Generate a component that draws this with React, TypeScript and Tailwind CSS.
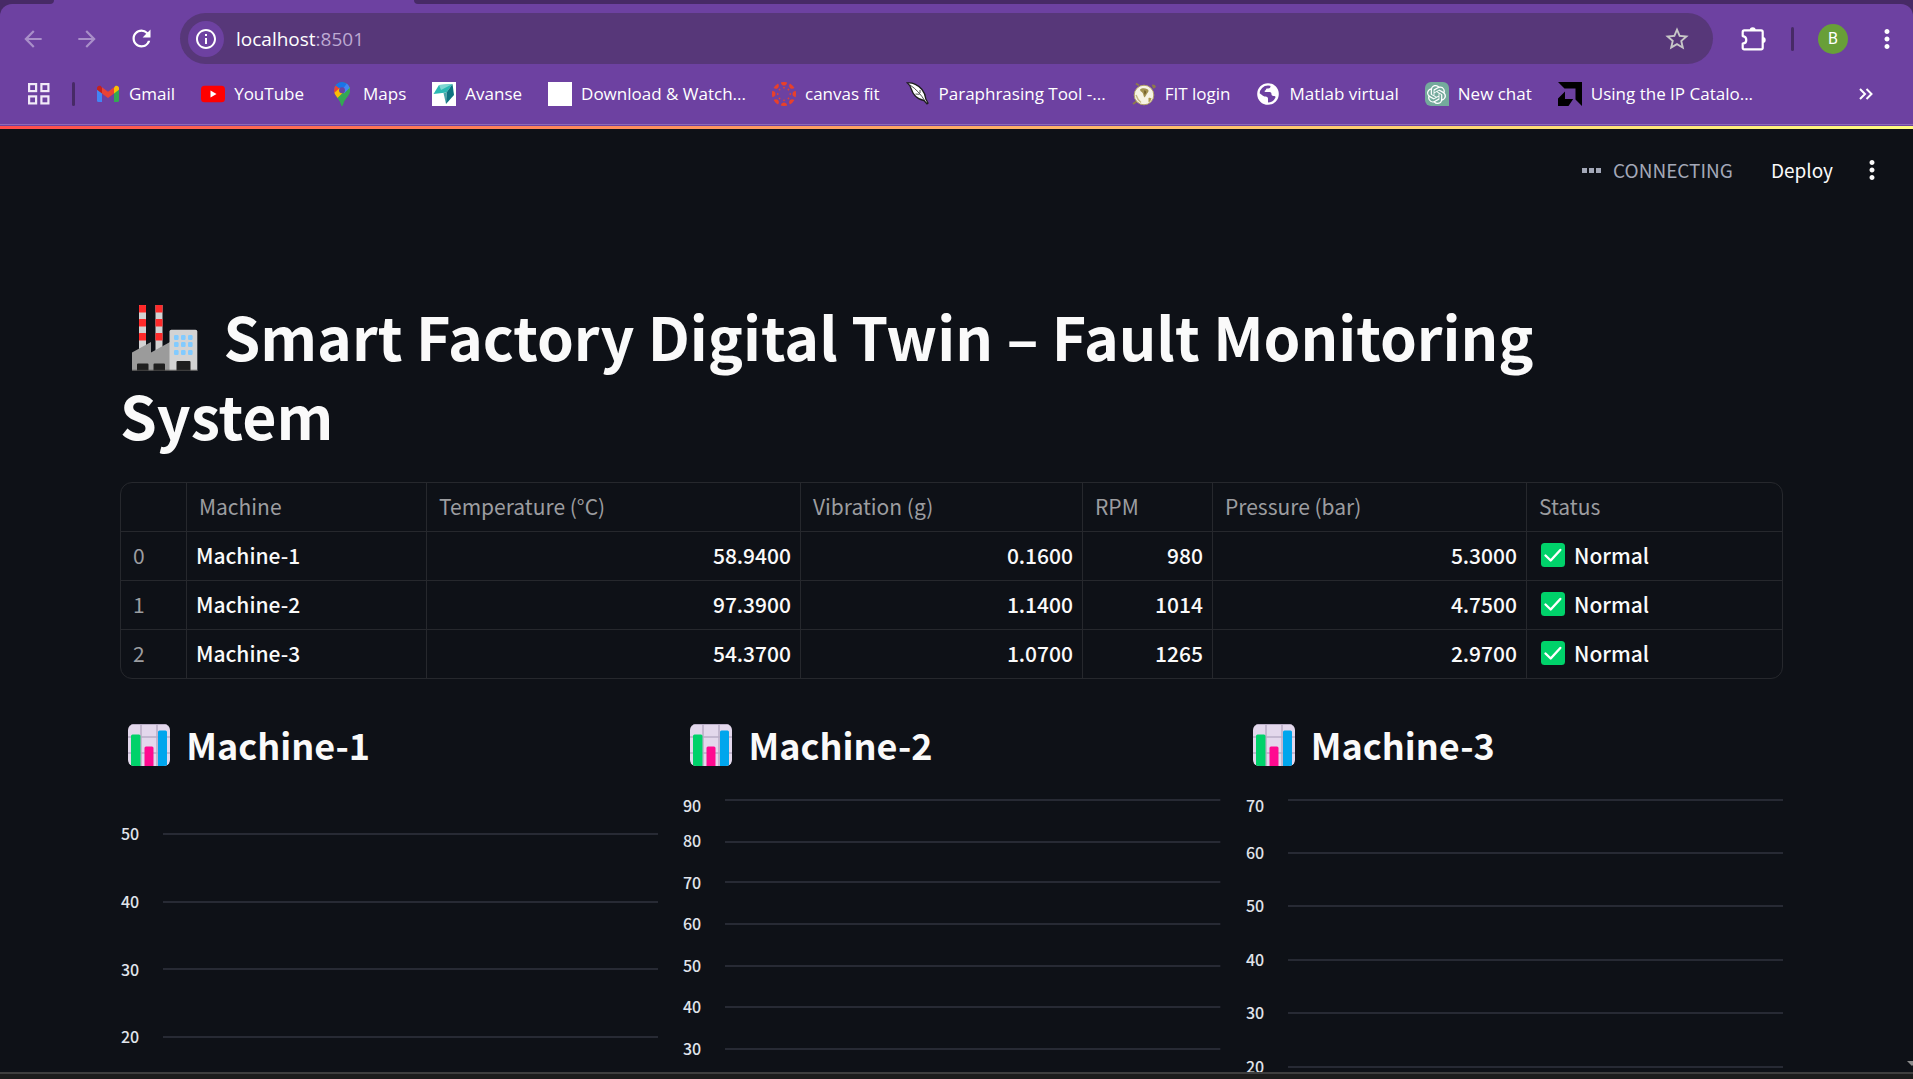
import type { ReactNode } from "react";
import {
  MdArrowBack,
  MdArrowForward,
  MdInfoOutline,
  MdMoreVert,
  MdRefresh,
  MdStarBorder,
} from "react-icons/md";
import { SiOpenai } from "react-icons/si";

/* ---------- Browser icons ---------- */

function PuzzleIcon() {
  return (
    <svg viewBox="0 0 26 26" className="size-[26px]" fill="none" aria-hidden="true">
      <path
        d="M3.2 4.4h17a1.5 1.5 0 0 1 1.5 1.5v16a1.5 1.5 0 0 1-1.5 1.5h-17a1.5 1.5 0 0 1-1.5-1.5v-4.2c2.4-.3 3.6-1.8 3.6-3.8S4.1 10.4 1.7 10.1V5.9a1.5 1.5 0 0 1 1.5-1.5z"
        stroke="#fff"
        strokeWidth="2.2"
        strokeLinejoin="round"
      />
      <path d="M8.7 4.2a3 3 0 0 1 6 0zM21.7 10.9a3 3 0 0 1 0 6z" fill="#fff" />
    </svg>
  );
}

function AppsIcon() {
  return (
    <svg viewBox="0 0 22 22" className="size-[22px]" fill="none" stroke="#f1eaf8" strokeWidth="2.2" aria-hidden="true">
      <rect x="1.1" y="1.1" width="7" height="7" />
      <rect x="13.4" y="1.1" width="7" height="7" />
      <rect x="1.1" y="13.4" width="7" height="7" />
      <rect x="13.4" y="13.4" width="7" height="7" />
    </svg>
  );
}

function DoubleChevron() {
  return (
    <svg viewBox="0 0 14 12" className="h-3 w-[14px]" fill="none" stroke="#fff" strokeWidth="2" aria-hidden="true">
      <path d="M1 1l5 5-5 5M7.5 1l5 5-5 5" />
    </svg>
  );
}

function GmailIcon() {
  return (
    <svg viewBox="0 0 24 24" className="size-6" aria-hidden="true">
      <path d="M1 7v11.500A1.500 1.500 0 0 0 2.500 20H6v-9.500z" fill="#4285f4" />
      <path d="M18 10.500V20h3.500a1.500 1.500 0 0 0 1.500-1.500V7z" fill="#34a853" />
      <path d="M18 5.700v5.800l5-3.800V6c0-2-2.300-3-3.800-1.900z" fill="#fbbc04" />
      <path d="M6 11.500V5.200l6 4.500 6-4.500v6.300L12 16z" fill="#ea4335" />
      <path d="M1 6v1.700l5 3.800V5.700L4.800 4.100C3.300 3 1 4 1 6z" fill="#c5221f" />
    </svg>
  );
}

function YouTubeIcon() {
  return (
    <svg viewBox="0 0 24 24" className="size-6" aria-hidden="true">
      <rect x="0" y="3.7" width="24" height="16.6" rx="3.6" fill="#f00" />
      <path d="M9.500 8.500v7l6-3.500z" fill="#fff" />
    </svg>
  );
}

function MapsIcon() {
  return (
    <svg viewBox="0 0 24 24" className="size-6" aria-hidden="true">
      <defs>
        <clipPath id="pin">
          <path d="M12 .2a8 8 0 0 0-8 8c0 3 1.400 4.800 3.300 7.200 1.800 2.300 3 4 3.600 6.800.2 1 .5 1.500 1.100 1.500s.9-.5 1.100-1.500c.6-2.800 1.800-4.500 3.600-6.800C18.600 13 20 11.200 20 8.200a8 8 0 0 0-8-8z" />
        </clipPath>
      </defs>
      <g clipPath="url(#pin)">
        <rect width="24" height="24" fill="#34a853" />
        <path d="M0 0h14l-9 11-5-2z" fill="#1a73e8" />
        <path d="M0 3.500h6L12 8 7 13.500 3 12z" fill="#ea4335" />
        <path d="M8.500 0H24v3.500L12 8.500 6 3.600z" fill="#1a73e8" />
        <path d="M14.500 0 24 4.500 15.500 9 12 8l4.500-6z" fill="#4285f4" />
        <path d="M3.500 11.500 9.800 6 12 8.500l6.500-5L20 7 7.500 17z" fill="#fbbc04" />
        <path d="M14 9.500 20 4.500V14l-8 10-5-7.500z" fill="#34a853" />
        <path d="M12 8.200 17.500 2 20 5.500l-6 6z" fill="#4285f4" />
      </g>
      <circle cx="12" cy="8.2" r="3" fill="#6d41a1" />
    </svg>
  );
}

function AvanseIcon() {
  return (
    <svg viewBox="0 0 24 24" className="size-6" aria-hidden="true">
      <rect width="24" height="24" fill="#fff" />
      <path d="M7 3 20.500 2 14.500 10.500 1.500 12z" fill="#2bb9b4" />
      <path d="M7 3 20.500 2 9 8z" fill="#7fd6d2" />
      <path d="M20.500 2 22 13 14 22 14.500 10.500z" fill="#0e7280" />
      <path d="M14.500 10.500 14 22 11.500 11z" fill="#4aa5a8" />
    </svg>
  );
}

function BlankIcon() {
  return <span className="size-6 bg-white" aria-hidden="true" />;
}

function CanvasIcon() {
  const turns = [0, 45, 90, 135, 180, 225, 270, 315];
  return (
    <svg viewBox="0 0 24 24" className="size-6" fill="#e8402a" aria-hidden="true">
      {turns.map((a) => (
        <g key={a} transform={`rotate(${a} 12 12)`}>
          <path d="M8.8.4a12 12 0 0 1 6.4 0c-.3 1.900-1.600 3.100-3.200 3.100S9.100 2.300 8.800.4z" />
          <circle cx="12" cy="5.7" r=".9" />
        </g>
      ))}
    </svg>
  );
}

function QuillIcon() {
  return (
    <svg viewBox="0 0 24 24" className="size-6" aria-hidden="true">
      <path
        d="M1.500 1c5-.6 11 2 14.500 6.500 2.500 3.200 3.600 7 3.800 9.500l2.200 4-1 .8-3-3.300C10 17 6.500 11 5.500 7.500 4.600 4.500 3.500 2.500 1.500 1z"
        fill="#fff"
        stroke="#1c1c1c"
        strokeWidth="1.3"
      />
      <path d="M4 3c6 4 11 9.500 15 16M9.500 12l4 .3M14 8v3" fill="none" stroke="#222" strokeWidth=".8" />
    </svg>
  );
}

function FitIcon() {
  return (
    <svg viewBox="0 0 24 24" className="size-6" aria-hidden="true">
      <path d="M4 1.500l3 2M1 22l4-3M20 3.500l3 .5M21 6l2.500-2" stroke="#8d7a4a" strokeWidth="2" />
      <circle cx="12" cy="13" r="9.8" fill="#f7f3e3" stroke="#b3a269" strokeWidth="1" />
      <path d="M8 7.500c1.500-1.500 5-1.500 7-.5 2 .8 2 2.500.5 4-1 1-1.300 2.500-2.800 4.500-1.500-1-1-3-2-4.500C9.500 9.500 8.200 9.500 8 7.500z" fill="#a39250" />
      <path d="M12 8.500c1.500 0 2.500.5 2 2.500l-1.500 2z" fill="#75622a" />
      <path d="M16.500 16c1.500-.5 2.500 0 3 .5-.5 2-1.500 3-3 4z" fill="#b09a4c" />
      <path d="M4 13c1 3 2.500 5.500 5 7.500" fill="none" stroke="#c9bb84" strokeWidth="1.5" />
    </svg>
  );
}

function GlobeIcon() {
  return (
    <svg viewBox="0 0 24 24" className="size-6" aria-hidden="true">
      <circle cx="12" cy="12" r="9.6" fill="none" stroke="#fff" strokeWidth="2.4" />
      <path d="M2 11c3 0 4.500 3.600 7.500 3.600 1.600 0 2.500 1 2.500 2.200V22C5 22 1.500 17 2 11z" fill="#fff" />
      <path d="M14.500 2v2.500c0 1.200-1 2-2.200 2h-1.500c-.8 0-.6 1.600-1.600 2-.9.3-.9 1.600.3 1.600h4.200c1.300 0 1.800 1 1.800 2.200 0 1.300.8 1.700 2 1.700 1.700 0 2.500.8 2.300 2.500C23 12 22 5 14.500 2z" fill="#fff" />
    </svg>
  );
}

function ChatIcon() {
  return (
    <span className="flex size-6 items-center justify-center rounded-md rounded-br-none bg-[#74aa9c]" aria-hidden="true">
      <SiOpenai className="size-[19px] text-white" />
    </span>
  );
}

function AmdIcon() {
  return (
    <svg viewBox="0 0 24 24" className="size-6" aria-hidden="true">
      <path d="M0 0h24v24l-6.500-6.500V6.500H6.500z" fill="#000" />
      <path d="M7 9.500V17h8.200L10.500 24H0v-7.500z" fill="#000" />
    </svg>
  );
}

/* ---------- Page emoji ---------- */

function FactoryEmoji() {
  const stripes = [0, 14, 28];
  const cols = [42, 49, 56];
  const rows = [30, 37, 45];
  return (
    <svg
      viewBox="0 0 66 66"
      role="img"
      aria-label="factory"
      className="ml-3 mr-3 inline-block size-[66px] align-[-10px]"
    >
      {[7, 23.5].map((x) => (
        <g key={x}>
          <rect x={x} y="0" width="7" height="48" fill="#d3d3d3" />
          {stripes.map((y) => (
            <rect key={y} x={x} y={y} width="7" height="7.5" rx=".5" fill="#ff2a2a" />
          ))}
        </g>
      ))}
      <path d="M0 47.500 19 37v10.500L38 37v29H0z" fill="#9b9b9b" />
      <path d="M37.500 26.500a1.800 1.800 0 0 1 1.800-1.800H63.500a1.800 1.800 0 0 1 1.800 1.800V66H37.500z" fill="#d3d3d3" />
      {rows.map((y) =>
        cols.map((x) => <rect key={`${x}-${y}`} x={x} y={y} width="4.6" height="5" rx="1.2" fill="#82cbff" />),
      )}
      <path d="M5 59.500a1 1 0 0 1 1-1h9.500a1 1 0 0 1 1 1V66H5zM21.500 59.500a1 1 0 0 1 1-1H32a1 1 0 0 1 1 1V66H21.500zM44.500 57a1 1 0 0 1 1-1h12a1 1 0 0 1 1 1v9h-14z" fill="#1f1f1f" />
      <path d="M0 65.300h65.300" stroke="#444" strokeWidth="1" />
    </svg>
  );
}

function ChartEmoji() {
  return (
    <svg
      viewBox="0 0 42 42"
      role="img"
      aria-label="bar chart"
      className="ml-2 mr-2 inline-block size-[42px] align-[-6px]"
    >
      <defs>
        <clipPath id="tile">
          <rect width="42" height="42" rx="6" />
        </clipPath>
      </defs>
      <g clipPath="url(#tile)">
        <rect width="42" height="42" fill="#e3d8ec" />
        <path d="M0 13h42M0 29h42M13 0v42M29 0v42" stroke="#b9adc6" strokeWidth="1.5" />
        <path d="M0 .5h42" stroke="#b9adc6" />
        <rect x="3" y="10.5" width="9.5" height="34" rx="1.5" fill="#00d26a" />
        <rect x="16.5" y="22.5" width="9" height="22" rx="1.5" fill="#ff0a90" />
        <rect x="30" y="6.5" width="9" height="38" rx="1.5" fill="#00a6ed" />
      </g>
    </svg>
  );
}

function CheckEmoji() {
  return (
    <svg viewBox="0 0 24 24" role="img" aria-label="check" className="size-6 shrink-0">
      <rect width="24" height="24" rx="3.5" fill="#00d26a" />
      <path d="M4.500 12.500 9.700 17.500 19.300 7" fill="none" stroke="#fff" strokeWidth="2.4" strokeLinecap="round" strokeLinejoin="round" />
    </svg>
  );
}

/* ---------- Data ---------- */

const bookmarks: { label: string; icon: ReactNode }[] = [
  { label: "Gmail", icon: <GmailIcon /> },
  { label: "YouTube", icon: <YouTubeIcon /> },
  { label: "Maps", icon: <MapsIcon /> },
  { label: "Avanse", icon: <AvanseIcon /> },
  { label: "Download & Watch...", icon: <BlankIcon /> },
  { label: "canvas fit", icon: <CanvasIcon /> },
  { label: "Paraphrasing Tool -...", icon: <QuillIcon /> },
  { label: "FIT login", icon: <FitIcon /> },
  { label: "Matlab virtual", icon: <GlobeIcon /> },
  { label: "New chat", icon: <ChatIcon /> },
  { label: "Using the IP Catalo...", icon: <AmdIcon /> },
];

const machines = [
  { name: "Machine-1", temperature: "58.9400", vibration: "0.1600", rpm: "980", pressure: "5.3000", status: "Normal" },
  { name: "Machine-2", temperature: "97.3900", vibration: "1.1400", rpm: "1014", pressure: "4.7500", status: "Normal" },
  { name: "Machine-3", temperature: "54.3700", vibration: "1.0700", rpm: "1265", pressure: "2.9700", status: "Normal" },
];

type Tick = { value: number; line: number; label: number };

const charts: { title: string; ticks: Tick[] }[] = [
  {
    title: "Machine-1",
    ticks: [
      { value: 50, line: 44, label: 44 },
      { value: 40, line: 112, label: 112 },
      { value: 30, line: 179, label: 180 },
      { value: 20, line: 247, label: 247 },
    ],
  },
  {
    title: "Machine-2",
    ticks: [
      { value: 90, line: 10, label: 16 },
      { value: 80, line: 52, label: 51 },
      { value: 70, line: 92, label: 93 },
      { value: 60, line: 134, label: 134 },
      { value: 50, line: 176, label: 176 },
      { value: 40, line: 217, label: 217 },
      { value: 30, line: 259, label: 259 },
    ],
  },
  {
    title: "Machine-3",
    ticks: [
      { value: 70, line: 10, label: 16 },
      { value: 60, line: 63, label: 63 },
      { value: 50, line: 116, label: 116 },
      { value: 40, line: 170, label: 170 },
      { value: 30, line: 223, label: 223 },
      { value: 20, line: 277, label: 277 },
    ],
  },
];

/* ---------- Browser chrome ---------- */

function BrowserChrome() {
  return (
    <div className="shrink-0 bg-[#6d41a1] font-['Open_Sans',sans-serif] text-white">
      <div className="flex h-1">
        <div className="w-[54px] rounded-br bg-[#472a66]" />
        <div className="w-[360px]" />
        <div className="flex-1 rounded-bl bg-[#472a66]" />
      </div>
      <div className="bg-[#472a66]">
        <div className="rounded-t-xl bg-[#6d41a1] pt-[9px]">
          <div className="flex items-center pl-5 pr-[11px]">
            <button type="button" aria-label="Back" className="text-[#a98fc9]">
              <MdArrowBack className="size-[26px]" />
            </button>
            <button type="button" aria-label="Forward" className="ml-7 text-[#a98fc9]">
              <MdArrowForward className="size-[26px]" />
            </button>
            <button type="button" aria-label="Reload" className="ml-7">
              <MdRefresh className="size-[27px]" />
            </button>
            <div className="ml-[25px] flex h-[51px] flex-1 items-center rounded-full bg-[#573779] pl-2 pr-[22px]">
              <button type="button" aria-label="Site information" className="flex size-9 items-center justify-center rounded-full bg-[#6d41a1]">
                <MdInfoOutline className="size-6" />
              </button>
              <a href="http://localhost:8501" className="ml-3 flex-1 text-[19px] leading-6">
                localhost<span className="text-[#bda9d2]">:8501</span>
              </a>
              <button type="button" aria-label="Bookmark this tab" className="text-[#c7c7c7]">
                <MdStarBorder className="size-7" />
              </button>
            </div>
            <button type="button" aria-label="Extensions" className="ml-7">
              <PuzzleIcon />
            </button>
            <span className="ml-6 h-6 w-[3px] rounded-full bg-[#472a66]" />
            <button type="button" aria-label="Profile" className="ml-6 flex size-[30px] items-center justify-center rounded-full bg-[#689f38] font-[Roboto,sans-serif] text-base leading-5">
              B
            </button>
            <button type="button" aria-label="Browser menu" className="ml-6">
              <MdMoreVert className="size-[30px]" />
            </button>
          </div>
          <div className="flex h-[60px] items-center pl-7 pr-10">
            <button type="button" aria-label="Apps">
              <AppsIcon />
            </button>
            <span className="ml-[22px] h-6 w-[3px] rounded-full bg-[#472a66]" />
            <nav className="ml-[21px] flex flex-1 items-center gap-[26px] whitespace-nowrap text-[17px] leading-6">
              {bookmarks.map((b) => (
                <a key={b.label} href="#" className="flex items-center gap-[9px]">
                  {b.icon}
                  {b.label}
                </a>
              ))}
            </nav>
            <button type="button" aria-label="More bookmarks">
              <DoubleChevron />
            </button>
          </div>
        </div>
      </div>
      <div className="h-0.5 border-t border-[#8f6bb8]" />
    </div>
  );
}

/* ---------- Page content ---------- */

function AppHeader() {
  return (
    <header className="flex h-[82px] items-center justify-end pr-[26px] text-[19px] leading-6 text-[#fafafa]">
      <span className="flex gap-0.5" aria-hidden="true">
        <span className="size-[5px] bg-[#a3a8b8]" />
        <span className="size-[5px] bg-[#a3a8b8]" />
        <span className="size-[5px] bg-[#a3a8b8]" />
      </span>
      <span className="ml-3 text-[#a3a8b8]">CONNECTING</span>
      <button type="button" className="ml-[38px]">
        Deploy
      </button>
      <button type="button" aria-label="Main menu" className="ml-6">
        <MdMoreVert className="size-[30px]" />
      </button>
    </header>
  );
}

const headCell = "h-[49px] border-b border-r border-[#26282d] pb-0.5 pl-3 text-left font-normal text-[#9c9da0] last:border-r-0";
const bodyCell = "h-[49px] border-b border-r border-[#26282d] px-[9px] pb-0.5 font-medium text-[#fafafa] last:border-r-0 group-last:h-12 group-last:border-b-0";

function MachineTable() {
  return (
    <div className="mt-7 overflow-hidden rounded-xl border border-[#26282d]">
      <table className="w-full table-fixed border-separate border-spacing-0 text-[21px] leading-6">
        <colgroup>
          <col className="w-[66px]" />
          <col className="w-[240px]" />
          <col className="w-[374px]" />
          <col className="w-[282px]" />
          <col className="w-[130px]" />
          <col className="w-[314px]" />
          <col />
        </colgroup>
        <thead>
          <tr>
            <th scope="col" className={headCell} aria-label="Index" />
            <th scope="col" className={headCell}>Machine</th>
            <th scope="col" className={headCell}>Temperature (°C)</th>
            <th scope="col" className={headCell}>Vibration (g)</th>
            <th scope="col" className={headCell}>RPM</th>
            <th scope="col" className={headCell}>Pressure (bar)</th>
            <th scope="col" className={headCell}>Status</th>
          </tr>
        </thead>
        <tbody>
          {machines.map((m, i) => (
            <tr key={m.name} className="group">
              <th scope="row" className={`${headCell} group-last:h-12 group-last:border-b-0`}>{i}</th>
              <td className={bodyCell}>{m.name}</td>
              <td className={`${bodyCell} text-right`}>{m.temperature}</td>
              <td className={`${bodyCell} text-right`}>{m.vibration}</td>
              <td className={`${bodyCell} text-right`}>{m.rpm}</td>
              <td className={`${bodyCell} text-right`}>{m.pressure}</td>
              <td className={bodyCell}>
                <span className="flex items-center gap-[9px] pl-[5px]">
                  <CheckEmoji />
                  {m.status}
                </span>
              </td>
            </tr>
          ))}
        </tbody>
      </table>
    </div>
  );
}

function LineChart({ ticks }: { ticks: Tick[] }) {
  return (
    <svg className="mt-6 h-[420px] w-full" role="img" aria-label="Sensor history">
      {ticks.map((t) => (
        <g key={t.value}>
          <line x1="43" x2="100%" y1={t.line} y2={t.line} stroke="#31333f" strokeWidth="1.5" />
          <text x="1" y={t.label + 6} fontSize="16" fontWeight="500" fill="#e0e4eb">
            {t.value}
          </text>
        </g>
      ))}
    </svg>
  );
}

export default function App() {
  return (
    <div className="flex h-screen flex-col overflow-hidden bg-[#0e1117]">
      <BrowserChrome />
      <div className="h-[3px] shrink-0 bg-linear-to-r from-[#ff4b4b] to-[#fffd80]" />
      <div className="flex min-h-0 flex-1 flex-col overflow-hidden font-['Noto_Sans_CJK_SC',sans-serif] text-[#fafafa]">
        <AppHeader />
        <div className="flex min-h-0 flex-1">
          <main className="min-w-0 flex-1 overflow-hidden px-[120px] pt-[85px]">
            <h1 className="pr-10 text-[59px] font-bold leading-[79px]">
              <FactoryEmoji /> Smart Factory Digital Twin – Fault Monitoring System
            </h1>
            <MachineTable />
            <div className="mt-11 grid grid-cols-3 gap-6">
              {charts.map((c) => (
                <section key={c.title}>
                  <h3 className="text-4xl font-bold leading-[43px]">
                    <ChartEmoji /> {c.title}
                  </h3>
                  <LineChart ticks={c.ticks} />
                </section>
              ))}
            </div>
          </main>
          <div className="flex w-2.5 shrink-0 items-end justify-end pb-1.5" aria-hidden="true">
            <svg viewBox="0 0 6 5" className="h-[5px] w-1.5">
              <path d="M0 0h10L5 5z" fill="#8b8b8b" />
            </svg>
          </div>
        </div>
      </div>
      <footer className="h-[7px] shrink-0 border-t-2 border-[#3f3f3f] bg-[#1c1c1c]" />
    </div>
  );
}
